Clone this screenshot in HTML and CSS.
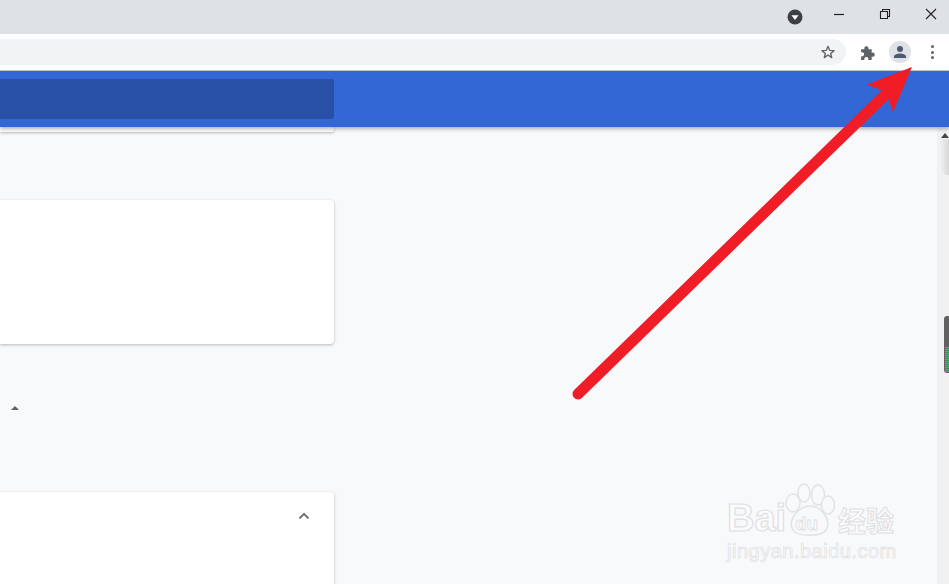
FILE: index.html
```html
<!DOCTYPE html>
<html lang="zh">
<head>
    <meta charset="UTF-8">
    <meta name="viewport" content="width=device-width, initial-scale=1.0">
    <title>Chrome</title>
    <link rel="stylesheet" href="styles.css">
</head>
<body>

<!-- tab strip -->
<div class="tabstrip">
    <svg class="tab-search" width="16" height="16" viewBox="0 0 16 16">
        <circle cx="8" cy="8" r="7.5" fill="#3c4043"/>
        <path d="M4.4 6.3h7.2L8 10.9z" fill="#fff"/>
    </svg>
    <div class="win-btn">
        <svg width="12" height="12" viewBox="0 0 12 12"><path d="M1 6.500h10" stroke="#202124" stroke-width="1.2" fill="none"/></svg>
    </div>
    <div class="win-btn">
        <svg width="12" height="12" viewBox="0 0 12 12"><path d="M1.500 3.500h7v7h-7zM3.500 3.500v-2h7v7h-2" stroke="#202124" stroke-width="1.1" fill="none"/></svg>
    </div>
    <div class="win-btn">
        <svg width="12" height="12" viewBox="0 0 12 12"><path d="M1 1l10 10M11 1L1 11" stroke="#202124" stroke-width="1.1" fill="none"/></svg>
    </div>
</div>

<!-- toolbar -->
<div class="toolbar">
    <div class="omnibox">
        <svg width="16" height="16" viewBox="0 0 24 24"><path d="M12 3.500l2.500 6 6.500.5-5 4.200 1.600 6.300L12 16.600 6.400 20.500 8 14.200 3 10l6.500-.5z" fill="none" stroke="#5f6368" stroke-width="2" stroke-linejoin="round"/></svg>
    </div>
    <svg class="puzzle" width="17" height="17" viewBox="0 0 16 16"><path d="M1 5h3.200a2 2 0 1 1 3.600 0H11v3.200a2 2 0 1 1 0 3.600V15H7.800a2 2 0 1 0-3.600 0H1v-3.500a2 2 0 1 0 0-3.600z" fill="#5f6368"/></svg>
    <div class="avatar">
        <svg width="16" height="16" viewBox="0 0 16 16"><circle cx="8" cy="5" r="3" fill="#4d5a73"/><path d="M2 14v-1.500C2 10.300 5.500 9.400 8 9.400s6 .9 6 3.100V14z" fill="#4d5a73"/></svg>
    </div>
    <div class="menu-dots"><span></span><span></span><span></span></div>
</div>

<!-- blue header -->
<div class="app-bar">
    <div class="search-box"></div>
</div>

<div class="page">
    <div class="content">
        <div class="card card-top"></div>
        <div class="card card-mid"></div>
        <div class="caret"></div>
        <div class="card card-low">
            <svg width="14" height="14" viewBox="0 0 14 14"><path d="M2.500 9.300L7 4.900l4.500 4.400" fill="none" stroke="#5f6368" stroke-width="1.800"/></svg>
        </div>
    </div>
    <div class="scrollbar">
        <div class="scroll-up"></div>
        <div class="scroll-shade"></div>
        <div class="scroll-thumb"><div class="thumb-level"></div></div>
    </div>
</div>

<!-- red arrow drawn over the screenshot -->
<svg class="arrow" width="949" height="584" viewBox="0 0 949 584">
    <path d="M578 394L884 96" stroke="#f01c26" stroke-width="11" stroke-linecap="round" fill="none"/>
    <path d="M912 67L867 84.500 886 92 893 112z" fill="#f01c26"/>
</svg>

<!-- watermark -->
<div class="watermark">
    <div class="wm-row">
        <span class="wm-bai">Bai</span><span class="wm-cn">经验</span>
        <div class="wm-paw">
            <svg width="50" height="56" viewBox="0 0 50 56">
                <g fill="#f8f9fa" stroke="#e2e3e5" stroke-width="1.500">
                    <ellipse cx="19" cy="11" rx="6" ry="9"/>
                    <ellipse cx="33" cy="13" rx="6.500" ry="10"/>
                    <ellipse cx="8" cy="21" rx="7" ry="9"/>
                    <ellipse cx="43" cy="23" rx="6.500" ry="9"/>
                    <path d="M8 48c-6-10 6-24 17-24s22 14 16 24c-4 7-29 7-33 0z"/>
                </g>
            </svg>
            <span class="wm-du">du</span>
        </div>
    </div>
    <div class="wm-url">jingyan.baidu.com</div>
</div>

</body>
</html>
```

FILE: styles.css
```css
body {
    font-family: "Liberation Sans", Arial, sans-serif;
    margin: 0;
    height: 584px;
    overflow: hidden;
    background-color: #f8f9fa;
    position: relative;
}

/* Tab strip */
.tabstrip {
    height: 34px;
    background-color: #dee1e6;
    display: flex;
    align-items: center;
    justify-content: flex-end;
    margin-right: -5px;
}

.tab-search {
    margin-right: 13px;
    margin-top: 0;
}

.win-btn {
    width: 46px;
    height: 30px;
    display: flex;
    align-items: center;
    justify-content: center;
    margin-top: -6px;
}

/* Toolbar */
.toolbar {
    height: 36px;
    background-color: #fff;
    display: flex;
    align-items: center;
    border-bottom: 1px solid #c9cbcf;
}

.omnibox {
    width: 846px;
    height: 26px;
    box-sizing: border-box;
    background-color: #f1f3f4;
    border-radius: 0 13px 13px 0;
    display: flex;
    align-items: center;
    justify-content: flex-end;
    padding-right: 10px;
}

.puzzle {
    margin-left: 14px;
}

.avatar {
    width: 22px;
    height: 22px;
    margin-left: 12px;
    border-radius: 50%;
    background-color: #dee1e6;
    display: flex;
    align-items: center;
    justify-content: center;
}

.menu-dots {
    margin-left: 20px;
    display: flex;
    flex-direction: column;
    gap: 2.500px;
}

.menu-dots span {
    width: 3px;
    height: 3px;
    border-radius: 50%;
    background-color: #5f6368;
}

/* Blue header */
.app-bar {
    height: 56px;
    background-color: #3367d6;
    box-shadow: 0 2px 4px rgba(0, 0, 0, 0.3);
    padding-top: 8px;
    box-sizing: border-box;
    position: relative;
    z-index: 2;
}

.search-box {
    width: 334px;
    height: 40px;
    background-color: #2850a7;
    border-radius: 0 2px 2px 0;
}

/* Page */
.page {
    display: flex;
    height: 457px;
}

.content {
    flex: 1;
    overflow: hidden;
}

.card {
    width: 334px;
    background-color: #fff;
    border-radius: 0 4px 4px 0;
    box-shadow: 0 1px 3px rgba(60, 64, 67, 0.35);
}

.card-top {
    height: 5px;
}

.card-mid {
    height: 144px;
    margin-top: 68px;
}

.caret {
    width: 0;
    height: 0;
    margin: 62px 0 0 11px;
    border-left: 4.500px solid transparent;
    border-right: 4.500px solid transparent;
    border-bottom: 4px solid #5f6368;
}

.card-low {
    height: 120px;
    margin-top: 82px;
    box-sizing: border-box;
    padding: 17px 23px 0 0;
    display: flex;
    justify-content: flex-end;
    align-items: flex-start;
}

/* Scrollbar */
.scrollbar {
    width: 12px;
    background-color: #f1f1f2;
    position: relative;
}

.scroll-up {
    width: 0;
    height: 0;
    margin: 6px 0 0 4px;
    border-left: 4px solid transparent;
    border-right: 4px solid transparent;
    border-bottom: 5px solid #444;
}

.scroll-shade {
    height: 36px;
    margin: 1px 0 0 3px;
    background: linear-gradient(90deg, rgba(220, 220, 221, 0), #d8d8d9);
    border-radius: 0 0 0 8px;
}

.scroll-thumb {
    width: 5px;
    height: 57px;
    margin: 141px 0 0 7px;
    background-color: #616161;
    border-radius: 3px 0 0 3px;
    padding-top: 31px;
    box-sizing: border-box;
    box-shadow: 0 0 2px #fff;
}

.thumb-level {
    height: 25px;
    margin-left: 1px;
    background: repeating-linear-gradient(#22cc55 0, #22cc55 1px, #3a8f55 1px, #3a8f55 2px);
}

/* Overlays */
.arrow {
    position: absolute;
    left: 0;
    top: 0;
    z-index: 3;
}

.watermark {
    position: absolute;
    left: 727px;
    top: 482px;
    width: 175px;
    z-index: 3;
    color: #fafbfc;
}

.wm-row {
    display: flex;
    align-items: flex-end;
    height: 56px;
    position: relative;
}

.wm-paw {
    position: absolute;
    left: 58px;
    top: 0;
    width: 50px;
    height: 56px;
}

.wm-bai {
    width: 111px;
    font-size: 38px;
    font-weight: bold;
    line-height: 40px;
    -webkit-text-stroke: 1.200px #dfe0e2;
}

.wm-du {
    position: absolute;
    left: 10px;
    top: 31px;
    font-size: 19px;
    font-weight: bold;
    line-height: 22px;
    -webkit-text-stroke: 0.800px #dfe0e2;
}

.wm-cn {
    font-family: "Noto Sans CJK SC", sans-serif;
    font-size: 28px;
    font-weight: bold;
    line-height: 32px;
    margin-bottom: 2px;
    -webkit-text-stroke: 1px #dfe0e2;
}

.wm-url {
    font-size: 20px;
    line-height: 22px;
    margin-top: 2px;
    letter-spacing: 0.500px;
    -webkit-text-stroke: 0.700px #dfe0e2;
}
```
